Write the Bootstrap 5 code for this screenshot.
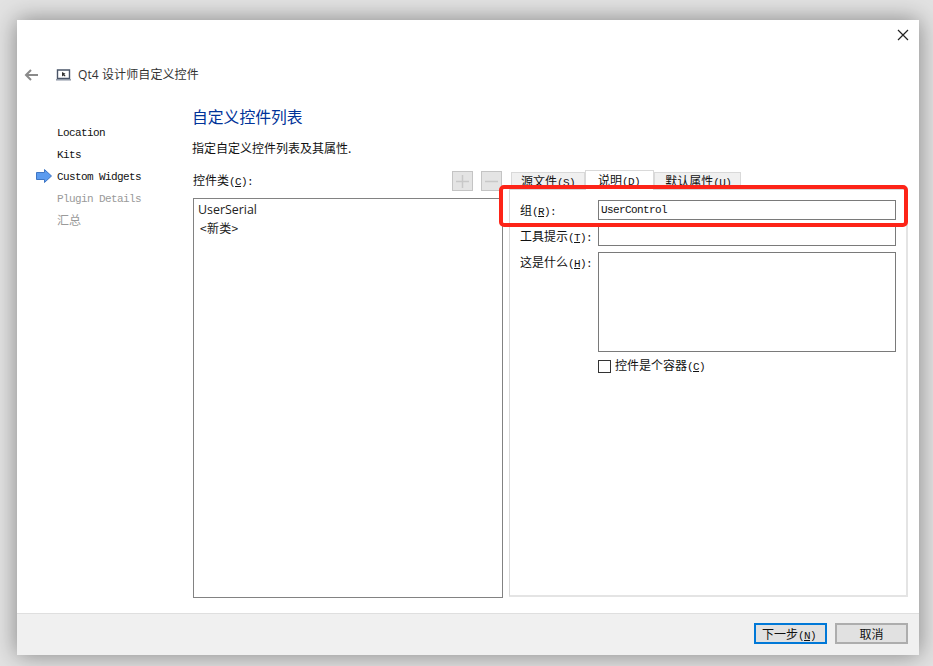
<!DOCTYPE html>
<html lang="zh">
<head>
<meta charset="utf-8">
<title>Qt4 设计师自定义控件</title>
<link href="https://cdn.jsdelivr.net/npm/bootstrap@5.3.0/dist/css/bootstrap.min.css" rel="stylesheet">
<style>
html,body{height:100%}
body{background:#e2e2e2;margin:0;padding:20px 14px 11px 17px;overflow:hidden;font-family:"Liberation Mono","Noto Sans CJK SC",monospace;font-size:11px;letter-spacing:-.6px;color:#111;line-height:18px}
.zh{font-family:"Noto Sans CJK SC",sans-serif;font-size:12px;letter-spacing:0}
.ui{font-family:"Open Sans","Noto Sans CJK SC",sans-serif;font-size:12px;letter-spacing:0}
.dlg{height:635px;background:#fff;box-shadow:0 0 22px rgba(0,0,0,.42)}
.topbar{height:30px;padding-right:9px}
.closer{width:14px;height:14px;padding:0;border:0;background:none;line-height:0;margin-top:8px}
.titlebar{height:48px;padding-left:8px;padding-top:1px}
.backicon{margin-left:-1px}
.brandicon{margin-left:18px}
.titletxt{color:#333;margin-left:7px;letter-spacing:.1px}
.side{width:175px;padding-top:23px;padding-left:19px}
.stepitem{height:22px;line-height:24px}
.stepitem .zh{line-height:22px}
.steptxt{margin-left:5px}
.stepicon{width:16px;height:14px;flex:none}
.stepspace{width:16px;flex:none}
.dim{color:#9a9a9a}
.mainarea{padding-top:4px;padding-bottom:15px;padding-right:11px;min-height:0}
.headline{color:#003399;font-family:"Noto Sans CJK SC",sans-serif;font-size:15.8px;line-height:30px;margin:0;font-weight:400;letter-spacing:0}
.subline{margin-top:7px;height:18px;margin-bottom:13px}
.leftcol{width:311px;flex:none;margin-right:6px}
.lefthead{height:28px;padding-right:1px;padding-left:1px}
.lefttitle{margin-top:1px}
.toolbtn{width:21px;height:20px;padding:0;border:1px solid #c4c4c4;background:#e4e4e4;border-radius:0;line-height:0;margin-left:8px;margin-top:1px}
.classlist{border:1px solid #828282;border-radius:0;margin-left:1px;flex:1;padding-top:1px;padding-left:4px}
.classrow{height:19px;line-height:19px;border:0;padding:0;background:none;color:#222}
.classrow.ui{font-size:12.4px}
.classrow.zh{padding-left:2px;letter-spacing:.3px;margin-top:-1px}
.rightcol{position:relative;min-width:0}
.tabstrip{height:19px;padding-left:2px;border:0;flex-wrap:nowrap}
.tabbtn{height:17px;margin-top:2px;background:#f0f0f0;border:1px solid #d9d9d9;border-bottom:0;padding:0 9px;line-height:15px;white-space:nowrap;color:#111}
.tabon{height:20px;margin-top:0;background:#fff;line-height:18px;position:relative;z-index:1;margin-bottom:-1px;padding:0 13px 0 12px}
.tablast{padding:0 9px 0 10px}
.tabpane{flex:1;border:1px solid #d9d9d9;border-right:2px solid #e4e4e4;border-bottom:2px solid #e4e4e4;padding:10px 10px 0 10px;margin-bottom:1px}
.lblcol{width:78px;flex:none}
.field{height:20px;border:1px solid #7a7a7a;border-radius:0;padding:0 2px;font:11px/18px "Liberation Mono",monospace;letter-spacing:-.6px;color:#111;box-shadow:none;min-height:0}
.fieldtall{height:100px;resize:none}
.formrow{margin-bottom:6px;height:20px}
.formrow.tallrow{height:100px}
.formrow label{line-height:20px;margin:0;height:20px}
.chkrow{margin-left:78px;height:16px}
input.chk[type=checkbox]{width:13px;height:13px;margin:0 4px 0 0;border:1px solid #333;border-radius:0;flex:none}
.redmark{position:absolute;left:-10px;top:15px;width:409px;height:42px;border:4px solid #fd2418;border-radius:5px;pointer-events:none;z-index:2}
.footbar{height:42px;background:#f0f0f0;border-top:1px solid #dfdfdf;padding:9px 11px 0 0}
.footbtn{width:73px;height:21px;padding:0;border:2px solid #adadad;background:#e1e1e1;border-radius:0;color:#111;margin-left:8px;font:11px/17px "Liberation Mono",monospace;letter-spacing:-.6px}
.footmain{border-color:#0078d7;padding-right:3px}
</style>
</head>
<body>
<div class="dlg d-flex flex-column">
  <div class="topbar d-flex justify-content-end">
    <button class="closer" aria-label="关闭"><svg width="14" height="14" viewBox="0 0 14 14"><path d="M2 2 12 12M12 2 2 12" stroke="#222" stroke-width="1.2" fill="none"/></svg></button>
  </div>
  <div class="titlebar d-flex align-items-center">
    <svg class="backicon" width="14" height="12" viewBox="0 0 14 12"><path d="M14 6H2M7 1 2 6l5 5" stroke="#8a8a8a" stroke-width="2" fill="none"/></svg>
    <svg class="brandicon" width="15" height="12" viewBox="0 0 15 12"><path d="M1.500 1H13.500V9.500H1.500Z" fill="#fff" stroke="#4a5568" stroke-width="1.400"/><path d="M0 10.800H15" stroke="#8a93a3" stroke-width="1.400"/><path d="M6 3 6 7.500 7.300 6.400 9 7.500 9.500 6.500 8.200 5.500 9.500 4.800Z" fill="#333"/></svg>
    <span class="titletxt ui">Qt4 设计师自定义控件</span>
  </div>
  <div class="d-flex flex-grow-1" style="min-height:0">
    <div class="side">
      <div class="stepitem d-flex"><span class="stepspace"></span><span class="steptxt">Location</span></div>
      <div class="stepitem d-flex"><span class="stepspace"></span><span class="steptxt">Kits</span></div>
      <div class="stepitem d-flex"><svg class="stepicon align-self-center" viewBox="0 0 16 14"><path d="M0.500 3.500H8.500V0.500L15.500 7 8.500 13.500V10.500H0.500Z" fill="#5b9bef" stroke="#3f76c4"/></svg><span class="steptxt">Custom Widgets</span></div>
      <div class="stepitem d-flex dim"><span class="stepspace"></span><span class="steptxt">Plugin Details</span></div>
      <div class="stepitem d-flex dim"><span class="stepspace"></span><span class="steptxt zh">汇总</span></div>
    </div>
    <div class="mainarea flex-grow-1 d-flex flex-column">
      <h1 class="headline">自定义控件列表</h1>
      <div class="subline zh">指定自定义控件列表及其属性.</div>
      <div class="d-flex flex-grow-1" style="min-height:0">
        <div class="leftcol d-flex flex-column">
          <div class="lefthead d-flex justify-content-between align-items-start">
            <span class="lefttitle"><span class="zh">控件类</span>(<u>C</u>):</span>
            <span class="d-flex">
              <button class="toolbtn" aria-label="添加"><svg width="15" height="15" viewBox="0 0 15 15"><path d="M7.500 1V14M1 7.500H14" stroke="#c8c8c8" stroke-width="1.500"/></svg></button>
              <button class="toolbtn" aria-label="删除"><svg width="15" height="15" viewBox="0 0 15 15"><path d="M1 7.500H14" stroke="#c8c8c8" stroke-width="1.500"/></svg></button>
            </span>
          </div>
          <ul class="classlist list-group">
            <li class="classrow list-group-item ui">UserSerial</li>
            <li class="classrow list-group-item zh">&lt;新类&gt;</li>
          </ul>
        </div>
        <div class="rightcol flex-grow-1 d-flex flex-column">
          <ul class="tabstrip nav">
            <li class="tabbtn"><span class="zh">源文件</span>(<u>S</u>)</li>
            <li class="tabbtn tabon"><span class="zh">说明</span>(<u>D</u>)</li>
            <li class="tabbtn tablast"><span class="zh">默认属性</span>(<u>U</u>)</li>
          </ul>
          <div class="tabpane">
            <div class="formrow d-flex"><label class="lblcol"><span class="zh">组</span>(<u>R</u>):</label><input class="field form-control" value="UserControl"></div>
            <div class="formrow d-flex"><label class="lblcol"><span class="zh">工具提示</span>(<u>T</u>):</label><input class="field form-control"></div>
            <div class="formrow tallrow d-flex"><label class="lblcol"><span class="zh">这是什么</span>(<u>H</u>):</label><textarea class="field fieldtall form-control"></textarea></div>
            <div class="chkrow d-flex align-items-center"><input type="checkbox" class="chk form-check-input"><span><span class="zh">控件是个容器</span>(<u>C</u>)</span></div>
          </div>
          <div class="redmark"></div>
        </div>
      </div>
    </div>
  </div>
  <div class="footbar d-flex justify-content-end">
    <button class="footbtn footmain"><span class="zh">下一步</span>(<u>N</u>)</button>
    <button class="footbtn"><span class="zh">取消</span></button>
  </div>
</div>
</body>
</html>
